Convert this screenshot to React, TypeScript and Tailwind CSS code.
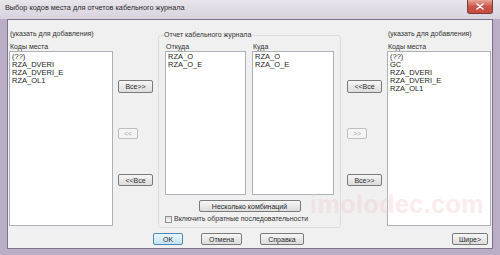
const leftCodes = ["(??)", "RZA_DVERI", "RZA_DVERI_E", "RZA_OL1"];
const rightCodes = ["(??)", "GC", "RZA_DVERI", "RZA_DVERI_E", "RZA_OL1"];
const fromCodes = ["RZA_O", "RZA_O_E"];
const toCodes = ["RZA_O", "RZA_O_E"];

const font = "font-['Liberation_Sans',Arial,sans-serif]";

function Btn({
  label,
  className = "",
  disabled = false,
  focused = false,
}: {
  label: string;
  className?: string;
  disabled?: boolean;
  focused?: boolean;
}) {
  let look = "border-[#7a7a7a] bg-gradient-to-b from-[#f6f6f6] to-[#dcdcdc] text-[#2a2a2a]";
  if (disabled) look = "border-[#bcc0c3] bg-[#f4f4f4] text-[#a8a8a8]";
  if (focused) look = "border-[#4a86b6] bg-gradient-to-b from-[#eaf6fd] to-[#c3e4f5] text-[#2a2a2a]";
  return (
    <div
      className={`flex items-center justify-center rounded-[2px] border text-[7px] leading-none ${look} ${className}`}
    >
      {label}
    </div>
  );
}

function ListBox({ items, className = "" }: { items: string[]; className?: string }) {
  return (
    <div className={`border border-[#adb1b8] bg-white pl-[2px] pt-[1px] ${className}`}>
      {items.map((item) => (
        <div key={item} className="h-[8px] text-[7.5px] leading-[8px] text-[#1e1e1e]">
          {item}
        </div>
      ))}
    </div>
  );
}

function CodesColumn({ items }: { items: string[] }) {
  return (
    <div className="flex w-[104px] flex-col pt-[10px]">
      <div className="h-[8px] pl-[1px] text-[7px] leading-[8px] text-[#333]">(указать для добавления)</div>
      <div className="mt-[5px] h-[8px] pl-[1px] text-[7px] leading-[8px] text-[#333]">Коды места</div>
      <ListBox items={items} className="h-[175px]" />
    </div>
  );
}

function MoveButtons({ top, mid, bottom }: { top: string; mid: string; bottom: string }) {
  return (
    <div className="flex w-[35px] flex-col pt-[60px]">
      <Btn label={top} className="h-[13px] w-[35px]" />
      <Btn label={mid} disabled className="mt-[35px] h-[11px] w-[20px]" />
      <Btn label={bottom} className="mt-[35px] h-[12px] w-[35px]" />
    </div>
  );
}

export default function App() {
  return (
    <div className={`relative flex h-[255px] w-[500px] flex-col overflow-hidden bg-[#b9aec6] ${font}`}>
      {/* title bar */}
      <div className="flex h-[19px] items-start bg-gradient-to-b from-[#e8e5ec] to-[#d8d2de]">
        <div className="pl-[5px] pt-[4px] text-[7.3px] leading-[8px] text-[#2a2a2a]">
          Выбор кодов места для отчетов кабельного журнала
        </div>
        <div className="ml-auto mr-[7px] flex h-[14px] w-[26px] items-center justify-center rounded-b-[3px] border border-t-0 border-[#7a3a3a] bg-gradient-to-b from-[#e8a59c] via-[#c9554a] to-[#c84a3e]">
          <svg width="8" height="7" viewBox="0 0 8 7">
            <path d="M1 1 L7 6 M7 1 L1 6" stroke="white" strokeWidth="1.6" strokeLinecap="round" />
          </svg>
        </div>
      </div>

      {/* client area */}
      <div className="mx-[7px] mb-[6px] flex flex-1 flex-col border border-[#7d7287] bg-[#f0f0f0]">
        <div className="flex pl-[1px]">
          <CodesColumn items={leftCodes} />
          <div className="ml-[5px]">
            <MoveButtons top="Все>>" mid="<<" bottom="<<Все" />
          </div>

          <fieldset className="ml-[5px] mt-[11px] h-[197px] w-[182px] rounded-[3px] border border-[#d8dde2] px-[6px]">
            <legend className="ml-[-1px] text-[7px] leading-[8px] text-[#333]">Отчет кабельного журнала</legend>
            <div className="mt-[4px] flex gap-[6px]">
              <div className="flex flex-col">
                <div className="h-[8px] pl-[1px] text-[7px] leading-[8px] text-[#333]">Откуда</div>
                <ListBox items={fromCodes} className="h-[144px] w-[81px]" />
              </div>
              <div className="flex flex-col">
                <div className="h-[8px] pl-[1px] text-[7px] leading-[8px] text-[#333]">Куда</div>
                <ListBox items={toCodes} className="h-[144px] w-[82px]" />
              </div>
            </div>
            <div className="mt-[5px] flex justify-center">
              <Btn label="Несколько комбинаций" className="h-[12px] w-[102px]" />
            </div>
            <div className="mt-[3px] flex items-center">
              <div className="h-[7px] w-[7px] border border-[#8e8f8f] bg-gradient-to-b from-[#dcdcdc] to-[#fbfbfb]" />
              <div className="ml-[2px] text-[7px] leading-[8px] text-[#333]">Включить обратные последовательности</div>
            </div>
          </fieldset>

          <div className="ml-[6px]">
            <MoveButtons top="<<Все" mid=">>" bottom="Все>>" />
          </div>
          <div className="ml-[5px]">
            <CodesColumn items={rightCodes} />
          </div>
        </div>

        <div className="mt-[5px] flex pl-[145px] pr-[4px]">
          <Btn label="OK" focused className="h-[12px] w-[30px]" />
          <Btn label="Отмена" className="ml-[18px] h-[12px] w-[41px]" />
          <Btn label="Справка" className="ml-[18px] h-[12px] w-[44px]" />
          <Btn label="Шире>" className="ml-auto h-[12px] w-[36px]" />
        </div>
      </div>

      {/* watermark */}
      <div className="pointer-events-none absolute left-[310px] top-[190px] text-[25px] font-bold leading-[28px] tracking-[0.5px] text-[#f2c9cd] opacity-35">
        imolodec.com
      </div>
    </div>
  );
}
